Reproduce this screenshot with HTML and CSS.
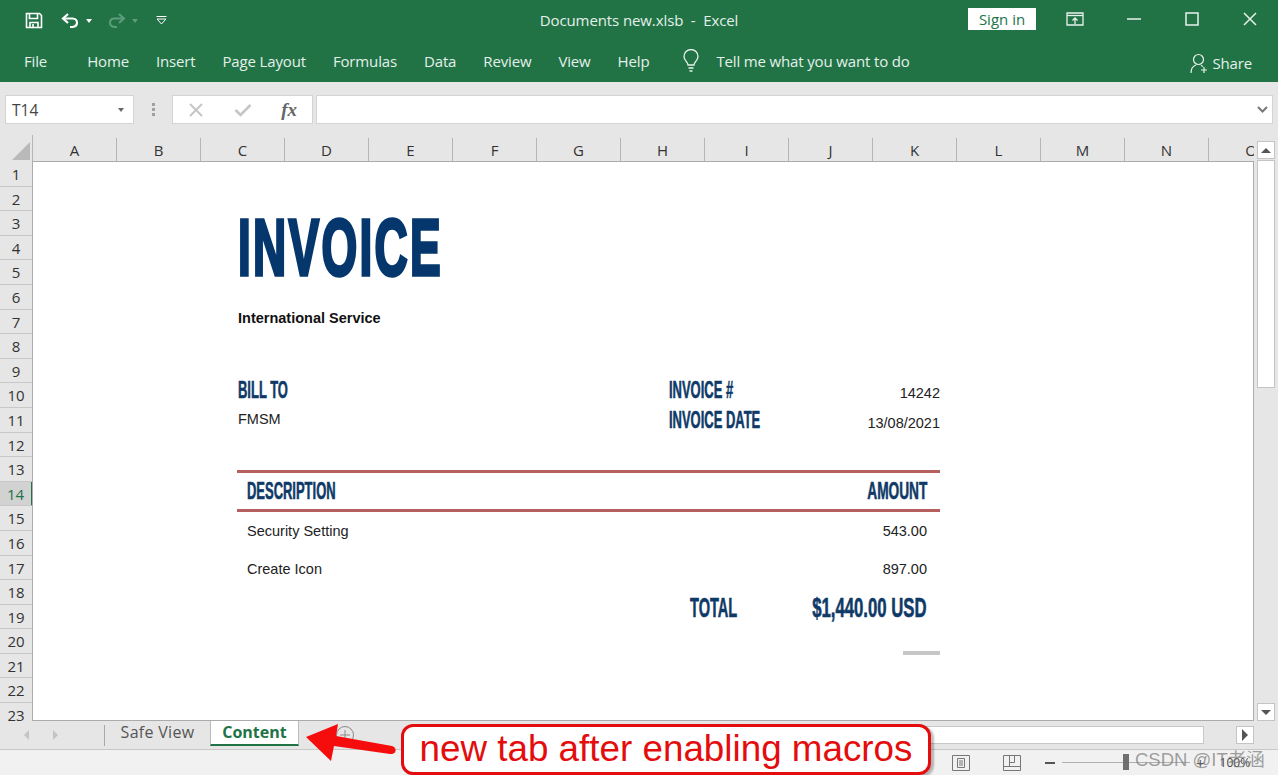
FILE: index.html
```html
<!DOCTYPE html>
<html lang="en">
<head>
    <meta charset="UTF-8">
    <title>Documents new.xlsb - Excel</title>
    <link rel="stylesheet" href="styles.css">
</head>
<body>
<div class="app">
    <header class="titlebar">
        <div class="qat">
            <svg class="qat-save" width="18" height="17" viewBox="0 0 18 17" fill="none" stroke="#fff" stroke-width="1.6"><path d="M1.5 1.5h13l2 2v12h-15z"/><path d="M4.5 1.5v5h8v-5" /><path d="M5 15.5v-5h8v5"/><path d="M8 12v3" /></svg>
            <svg class="qat-undo" width="19" height="16" viewBox="0 0 19 16" fill="none" stroke="#fff" stroke-width="2.2"><path d="M7 1L2 5.500l5 4.500"/><path d="M2 5.500h9.500c6 0 6 8 0 8.500H9"/></svg>
            <span class="caret"></span>
            <svg class="qat-redo" width="19" height="16" viewBox="0 0 19 16" fill="none" stroke="#5d9c7c" stroke-width="2"><path d="M12 1l5 4.500-5 4.500"/><path d="M17 5.500H7.500c-6 0-6 8 0 8.500H10"/></svg>
            <span class="caret caret-off"></span>
            <svg class="qat-more" width="11" height="9" viewBox="0 0 11 9" fill="none" stroke="#fff"><path d="M0.500 0.500h10"/><path d="M1 3l4.500 5L10 3z"/></svg>
        </div>
        <div class="doc-title">Documents new.xlsb&nbsp; - &nbsp;Excel</div>
        <div class="win-controls">
            <button class="signin">Sign in</button>
            <svg class="win-display" width="18" height="14" viewBox="0 0 18 14" fill="none" stroke="#e8f2ec" stroke-width="1.300"><path d="M1 1h16v12H1z"/><path d="M1 3.500h16"/><path d="M9 12V6M6.500 8.500L9 6l2.500 2.500"/></svg>
            <svg class="win-min" width="14" height="2" viewBox="0 0 14 2"><path d="M0 1h14" stroke="#e8f2ec" stroke-width="1.500"/></svg>
            <svg class="win-max" width="14" height="14" viewBox="0 0 14 14" fill="none"><path d="M1 1h12v12H1z" stroke="#e8f2ec" stroke-width="1.500"/></svg>
            <svg class="win-close" width="14" height="14" viewBox="0 0 14 14"><path d="M1 1l12 12M13 1L1 13" stroke="#e8f2ec" stroke-width="1.500"/></svg>
        </div>
    </header>

    <nav class="ribbon">
        <span class="tab-file">File</span>
        <span>Home</span>
        <span>Insert</span>
        <span>Page Layout</span>
        <span>Formulas</span>
        <span>Data</span>
        <span>Review</span>
        <span>View</span>
        <span>Help</span>
        <svg class="bulb" width="16" height="24" viewBox="0 0 16 24" fill="none" stroke="#e8f2ec" stroke-width="1.300"><path d="M5 16c0-3-4-4.500-4-8.500a7 7 0 0 1 14 0c0 4-4 5.500-4 8.500z"/><path d="M5.500 19h5M6.500 22h3"/></svg>
        <span class="tell">Tell me what you want to do</span>
        <span class="share">
            <svg width="19" height="21" viewBox="0 0 19 21" fill="none" stroke="#e8f2ec" stroke-width="1.200"><circle cx="8.500" cy="6.500" r="5"/><path d="M1 20c0-4 2-7 5-8M11 12.500c1 .3 1.500.6 2 1"/><path d="M14 14v6M11 17h6"/></svg>
            Share
        </span>
    </nav>

    <section class="formula-bar">
        <div class="name-box">T14<span class="name-caret"></span></div>
        <div class="bar-dots"><i></i><i></i><i></i></div>
        <div class="fx-box">
            <svg width="16" height="14" viewBox="0 0 16 14"><path d="M2 1l12 12M14 1L2 13" stroke="#c6c6c6" stroke-width="2"/></svg>
            <svg width="18" height="14" viewBox="0 0 18 14" fill="none"><path d="M1.500 7l5 5L16.500 2" stroke="#c6c6c6" stroke-width="2.600"/></svg>
            <span class="fx">fx</span>
        </div>
        <div class="formula-input">
            <svg width="11" height="7" viewBox="0 0 11 7" fill="none"><path d="M1 1l4.500 4.500L10 1" stroke="#777" stroke-width="2"/></svg>
        </div>
    </section>

    <section class="grid">
        <div class="corner"><span class="corner-mark"></span></div>
        <div class="col-heads">
            <span>A</span><span>B</span><span>C</span><span>D</span><span>E</span><span>F</span><span>G</span><span>H</span><span>I</span><span>J</span><span>K</span><span>L</span><span>M</span><span>N</span><span>O</span>
        </div>
        <div class="vscroll-top"><button class="sb-btn"><span class="arrow-up"></span></button></div>

        <div class="row-heads">
            <span>1</span><span>2</span><span>3</span><span>4</span><span>5</span><span>6</span><span>7</span><span>8</span><span>9</span><span>10</span><span>11</span><span>12</span><span>13</span><span class="row-active">14</span><span>15</span><span>16</span><span>17</span><span>18</span><span>19</span><span>20</span><span>21</span><span>22</span><span>23</span>
        </div>

        <div class="sheet">
            <div class="invoice">
                <h1 class="inv-title"><span class="cond">INVOICE</span></h1>
                <p class="inv-company">International Service</p>
                <div class="inv-meta">
                    <div class="bill">
                        <h3><span class="cond">BILL TO</span></h3>
                        <p>FMSM</p>
                    </div>
                    <div class="numbers">
                        <div class="num-row">
                            <h3><span class="cond">INVOICE #</span></h3>
                            <p>14242</p>
                        </div>
                        <div class="num-row">
                            <h3><span class="cond">INVOICE DATE</span></h3>
                            <p>13/08/2021</p>
                        </div>
                    </div>
                </div>
                <div class="table-head">
                    <h3><span class="cond">DESCRIPTION</span></h3>
                    <h3><span class="cond cond-right">AMOUNT</span></h3>
                </div>
                <div class="line"><span>Security Setting</span><span>543.00</span></div>
                <div class="line"><span>Create Icon</span><span>897.00</span></div>
                <div class="total">
                    <h3 class="total-label"><span class="cond">TOTAL</span></h3>
                    <h3><span class="cond cond-right cond-sum">$1,440.00 USD</span></h3>
                </div>
                <div class="sign-bar"></div>
            </div>
        </div>

        <div class="vscroll">
            <div class="sb-thumb"></div>
            <button class="sb-btn"><span class="arrow-down"></span></button>
        </div>
    </section>

    <section class="tabbar">
        <span class="nav-arrow nav-left"></span>
        <span class="nav-arrow nav-right"></span>
        <span class="tab-sep"></span>
        <span class="sheet-tab">Safe View</span>
        <span class="sheet-tab sheet-tab-on">Content</span>
        <svg class="add-sheet" width="20" height="20" viewBox="0 0 20 20" fill="none" stroke="#8a8a8a"><circle cx="10" cy="10" r="8.500"/><path d="M10 5v10M5 10h10"/></svg>
        <div class="hscroll">
            <div class="hs-thumb"></div>
            <div class="hs-track"></div>
            <button class="sb-btn"><span class="arrow-right"></span></button>
        </div>
    </section>

    <footer class="status">
        <svg class="st-normal" width="18" height="16" viewBox="0 0 18 16" fill="none" stroke="#777"><path d="M.5.500h17v15H.5z"/><path d="M5.500 3.500h7v9h-7zM7 6h4M7 8h4M7 10h4"/></svg>
        <svg class="st-layout" width="18" height="16" viewBox="0 0 18 16" fill="none" stroke="#777"><path d="M.5.500h17v15H.5z"/><path d="M.5 11.500h17M6.500.5v11M11.500.5v7h-5"/></svg>
        <span class="zoom-minus"></span>
        <span class="zoom-track"><i class="zoom-thumb"></i></span>
        <span class="zoom-plus">+</span>
        <span class="zoom-pct">100%</span>
    </footer>
</div>

<!-- annotation over the screenshot -->
<svg class="callout-arrow" width="92" height="38" viewBox="0 0 92 38">
    <path d="M1 13L33 0l-2 12 56 10c6 2 4 9-2 8L29 22l-3 15z" fill="#f50d0d"/>
</svg>
<div class="callout">new tab after enabling macros</div>
<div class="watermark">CSDN @IT老涵</div>
</body>
</html>
```

FILE: styles.css
```css
* {
    box-sizing: border-box;
}
html, body {
    margin: 0;
    height: 100%;
    overflow: hidden;
}
body {
    font-family: "Open Sans", sans-serif;
    background: #fff;
    position: relative;
}
h1, h3, p {
    margin: 0;
    font-weight: normal;
}
button {
    font-family: inherit;
    padding: 0;
    border: none;
}
.app {
    display: flex;
    flex-direction: column;
    height: 775px;
}

/* green title bar */
.titlebar {
    height: 41px;
    background: #217346;
    display: grid;
    grid-template-columns: 1fr auto 1fr;
    align-items: center;
    color: #e4f0e9;
    font-size: 15px;
}
.qat {
    display: flex;
    align-items: center;
    padding-left: 25px;
}
.qat-undo {
    margin-left: 18px;
}
.caret {
    width: 0;
    height: 0;
    margin-left: 6px;
    border: 3px solid transparent;
    border-top: 4px solid #fff;
    border-bottom: 0;
}
.caret-off {
    border-top-color: #5d9c7c;
}
.qat-redo {
    margin-left: 15px;
}
.qat-more {
    margin-left: 18px;
}
.doc-title {
    letter-spacing: -0.1px;
    padding-bottom: 2px;
}
.win-controls {
    display: flex;
    align-items: center;
    justify-content: flex-end;
    padding-right: 21px;
}
.signin {
    width: 68px;
    height: 22px;
    background: #fff;
    color: #217346;
    font-size: 15px;
    margin-right: 30px;
    margin-top: -3px;
}
.win-display {
    margin-top: -4px;
}
.win-min {
    margin-left: 43px;
    margin-top: -4px;
}
.win-max {
    margin-left: 44px;
    margin-top: -4px;
}
.win-close {
    margin-left: 44px;
    margin-top: -4px;
}

/* ribbon tabs */
.ribbon {
    height: 41px;
    background: #217346;
    color: #e4f0e9;
    font-size: 15px;
    display: flex;
    align-items: center;
    gap: 27px;
    padding: 0 26px 2px 24px;
    letter-spacing: -0.15px;
}
.tab-file {
    margin-right: 13px;
}
.bulb {
    margin-left: 7px;
    margin-right: -10px;
}
.share {
    margin-left: auto;
    display: flex;
    align-items: center;
    gap: 3px;
    padding-top: 5px;
}

/* name box and formula input */
.formula-bar {
    height: 53px;
    background: #e6e6e6;
    display: flex;
    padding: 13px 5px 11px;
}
.name-box {
    width: 129px;
    background: #fff;
    border: 1px solid #d4d4d4;
    color: #444;
    font-size: 15.500px;
    line-height: 28px;
    padding-left: 6px;
    position: relative;
}
.name-caret {
    position: absolute;
    right: 9px;
    top: 12px;
    border: 3.500px solid transparent;
    border-top: 4px solid #666;
    border-bottom: 0;
}
.bar-dots {
    width: 38px;
    display: flex;
    flex-direction: column;
    align-items: center;
    justify-content: center;
    gap: 2px;
}
.bar-dots i {
    width: 3px;
    height: 3px;
    background: #a0a0a0;
}
.fx-box {
    width: 141px;
    background: #fff;
    border: 1px solid #d4d4d4;
    display: flex;
    align-items: center;
    justify-content: space-between;
    padding: 0 15px;
}
.fx {
    font-family: "Liberation Serif", serif;
    font-style: italic;
    font-weight: bold;
    font-size: 19px;
    color: #666;
}
.formula-input {
    flex: 1;
    margin-left: 3px;
    background: #fff;
    border: 1px solid #d4d4d4;
    display: flex;
    align-items: center;
    justify-content: flex-end;
    padding-right: 4px;
}

/* worksheet grid */
.grid {
    height: 586px;
    display: grid;
    grid-template-columns: 33px 1fr 24px;
    grid-template-rows: 27px 1fr;
    background: #e6e6e6;
}
.corner {
    position: relative;
}
.corner-mark {
    position: absolute;
    left: 12px;
    top: 7px;
    border-style: solid;
    border-width: 0 0 18px 18px;
    border-color: transparent transparent #b9b9b9 transparent;
}
.col-heads {
    display: flex;
    overflow: hidden;
    border-left: 1px solid #b5b5b5;
    border-bottom: 1px solid #ababab;
    margin-left: -1px;
}
.col-heads span {
    flex: 0 0 84px;
    text-align: center;
    font-size: 15px;
    line-height: 24px;
    color: #333;
    border-right: 1px solid #b5b5b5;
    margin-top: 3px;
}
.col-heads span:last-child {
    border-right: none;
}
.row-heads {
    display: flex;
    flex-direction: column;
    overflow: hidden;
    border-right: 1px solid #ababab;
}
.row-heads span {
    flex: 0 0 24.600px;
    min-height: 0;
    text-align: center;
    font-size: 15px;
    line-height: 24px;
    color: #333;
    border-bottom: 1px solid #c8c8c8;
}
.row-heads .row-active {
    background: #d2d2d2;
    color: #217346;
    border-right: 2px solid #217346;
    margin-right: -1px;
}
.sheet {
    background: #fff;
    overflow: hidden;
    border-right: 1px solid #ababab;
    border-bottom: 1px solid #ababab;
}
.vscroll-top {
    display: flex;
    justify-content: center;
    padding-top: 6px;
}
.vscroll {
    display: flex;
    flex-direction: column;
    align-items: center;
    justify-content: space-between;
}
.sb-btn {
    width: 18px;
    height: 18px;
    background: #fff;
    border: 1px solid #c4c4c4;
    display: flex;
    align-items: center;
    justify-content: center;
}
.arrow-up {
    border: 5px solid transparent;
    border-bottom: 5px solid #555;
    border-top: 0;
}
.arrow-down {
    border: 5px solid transparent;
    border-top: 5px solid #555;
    border-bottom: 0;
}
.arrow-right {
    border: 6px solid transparent;
    border-left: 6px solid #555;
    border-right: 0;
}
.sb-thumb {
    width: 18px;
    height: 228px;
    margin-top: -2px;
    background: #fff;
    border: 1px solid #c4c4c4;
}

/* invoice printed on the sheet */
.invoice {
    width: 703px;
    margin-left: 204px;
    padding-top: 50px;
    color: #222;
    font-family: "Liberation Sans", Arial, sans-serif;
    font-size: 14.500px;
}
/* no condensed display font here, so squeeze bold and thicken it back */
.cond {
    display: inline-block;
    font-weight: bold;
    color: #0f3a68;
    white-space: nowrap;
    transform: scaleX(0.54);
    transform-origin: left center;
    -webkit-text-stroke: 0.6px #0f3a68;
}
.cond-right {
    transform: scaleX(0.57);
    transform-origin: right center;
}
.cond-sum {
    transform: scaleX(0.62);
}
.inv-title {
    font-size: 80px;
    line-height: 72px;
    padding-left: 1px;
}
.inv-title .cond {
    color: #05376d;
    letter-spacing: 4px;
    transform: scaleX(0.574);
    -webkit-text-stroke: 3.500px #05376d;
}
.inv-company {
    font-weight: bold;
    font-size: 14.500px;
    line-height: 18px;
    margin-top: 25px;
    padding-left: 1px;
    color: #111;
}
.inv-meta {
    display: flex;
    justify-content: space-between;
    margin-top: 48px;
    padding-left: 1px;
}
.inv-meta h3,
.table-head h3,
.total h3 {
    font-size: 24px;
    line-height: 30px;
}
.bill p {
    line-height: 17px;
    margin-top: 6px;
}
.numbers {
    width: 271px;
}
.num-row {
    display: flex;
    justify-content: space-between;
    align-items: center;
}
.num-row p {
    padding-top: 6px;
}
.table-head {
    display: flex;
    justify-content: space-between;
    height: 42px;
    margin-top: 35px;
    padding: 3px 13px 0 10px;
    border-top: 3px solid #b5605e;
    border-bottom: 3px solid #b5605e;
}
.line {
    display: flex;
    justify-content: space-between;
    height: 38px;
    line-height: 38px;
    padding: 0 13px 0 10px;
}
.total {
    display: flex;
    justify-content: space-between;
    margin-left: 453px;
    padding-right: 13px;
    margin-top: 5px;
}
.total h3 {
    font-size: 27px;
}
.total .total-label {
    flex: 0 0 50px;
    min-width: 0;
}
.sign-bar {
    width: 37px;
    height: 4px;
    background: #c6c6c6;
    margin: 28px 0 0 auto;
}

/* sheet tabs and horizontal scrollbar */
.tabbar {
    height: 29px;
    background: #e6e6e6;
    display: flex;
    align-items: flex-start;
    border-bottom: 1px solid #c8c8c8;
    position: relative;
}
.nav-arrow {
    margin-top: 9px;
    border: 5px solid transparent;
}
.nav-left {
    margin-left: 24px;
    border-right: 5px solid #c4c4c4;
    border-left: 0;
}
.nav-right {
    margin-left: 24px;
    border-left: 5px solid #c4c4c4;
    border-right: 0;
}
.tab-sep {
    width: 1px;
    height: 21px;
    margin: 4px 0 0 46px;
    background: #a8a8a8;
}
.sheet-tab {
    width: 105px;
    height: 25px;
    text-align: center;
    font-size: 16px;
    letter-spacing: 0.3px;
    line-height: 22px;
    color: #555;
}
.sheet-tab-on {
    width: 89px;
    background: #fff;
    color: #217346;
    font-weight: bold;
    letter-spacing: 0;
    border-left: 1px solid #bbb;
    border-right: 1px solid #bbb;
    border-bottom: 2px solid #217346;
}
.add-sheet {
    margin: 4px 0 0 36px;
}
.hscroll {
    display: flex;
    margin-left: auto;
    padding: 5px 24px 0 0;
    align-items: stretch;
    height: 23px;
}
.hs-thumb {
    width: 500px;
    background: #fff;
    border: 1px solid #c8c8c8;
}
.hs-track {
    width: 32px;
}
.hscroll .sb-btn {
    height: 18px;
}

/* status bar */
.status {
    flex: 1;
    background: #f1f1f1;
    display: flex;
    align-items: center;
    padding-left: 952px;
    position: relative;
}
.st-layout {
    margin-left: 33px;
}
.zoom-minus {
    width: 10px;
    height: 2px;
    margin-left: 24px;
    background: #555;
}
.zoom-track {
    width: 128px;
    height: 1px;
    margin-left: 7px;
    background: #b0b0b0;
    position: relative;
}
.zoom-thumb {
    position: absolute;
    left: 61px;
    top: -8px;
    width: 6px;
    height: 16px;
    background: #6f6f6f;
}
.zoom-plus {
    margin-left: 6px;
    font-size: 15px;
    color: #555;
}
.zoom-pct {
    margin-left: 15px;
    font-size: 12px;
    color: #444;
}

/* things drawn on top of the screenshot */
.callout-arrow {
    position: absolute;
    left: 305px;
    top: 724px;
}
.callout {
    position: absolute;
    left: 401px;
    top: 724px;
    width: 530px;
    height: 51px;
    background: #fff;
    border: 3px solid #e40d0d;
    border-radius: 12px;
    box-shadow: 3px 2px 2px rgba(0, 0, 0, 0.25);
    color: #e40d0d;
    font-family: "Liberation Sans", Arial, sans-serif;
    font-size: 36.800px;
    line-height: 43px;
    text-align: center;
    white-space: nowrap;
}
.watermark {
    position: absolute;
    left: 1135px;
    top: 748px;
    color: rgba(120, 120, 120, 0.7);
    font-family: "Liberation Sans", "Noto Sans CJK SC", sans-serif;
    font-size: 18.500px;
    line-height: 24px;
    white-space: nowrap;
}
```
